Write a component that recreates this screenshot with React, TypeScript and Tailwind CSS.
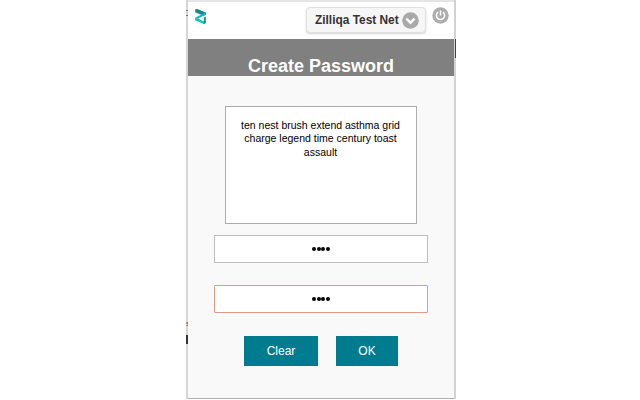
import React from "react";

function Logo() {
  return (
    <svg className="ml-[7px] mt-[7px] h-[15px] w-[11px]" viewBox="0 0 11 15" fill="none">
      <path d="M0.2 0.2 L2.4 0 L10.8 3.6 V5.8 L8.6 6.8 L0.2 3.2 Z" fill="#148a93" />
      <path d="M10.4 4.8 L0.8 9.4" stroke="#12b9b9" strokeWidth="2.1" />
      <path d="M0.2 9 L1.6 8.6 L9.6 13 L9.6 15 L8.6 15 L0.2 11.2 Z" fill="#12c4c2" />
      <path d="M8.8 8.6 L10.8 7.6 V14.2 L8.8 15 Z" fill="#118f96" />
    </svg>
  );
}

function NetworkSelect() {
  return (
    <div className="ml-[100px] mt-[5px] flex h-[26px] w-[120px] items-center rounded-[4px] border border-[#e0e0e0] bg-[#f6f6f6] pl-2 shadow-[0_1px_2px_rgba(0,0,0,0.18)]">
      <span className="w-[84px] whitespace-nowrap pt-px text-[11.9px] font-bold leading-[13px] text-[#333]">Zilliqa Test Net</span>
      <svg className="ml-[2.5px] h-[17px] w-[17px] shrink-0" viewBox="0 0 17 17" fill="none">
        <circle cx="8.5" cy="8.5" r="8.3" fill="#a9a9a9" />
        <path d="M4.4 6.7 L8.5 10.7 L12.6 6.7" stroke="white" strokeWidth="2.5" />
      </svg>
    </div>
  );
}

function PowerButton() {
  return (
    <svg className="ml-[5.5px] mt-[5px] h-[17px] w-[17px] shrink-0" viewBox="0 0 17 17" fill="none">
      <circle cx="8.5" cy="8.5" r="8.2" fill="#adadad" />
      <path d="M6 5.2 A4.1 4.1 0 1 0 11 5.2 M8.5 3.6 V8.5" stroke="white" strokeWidth="1.5" />
    </svg>
  );
}

function PasswordField({ active = false }: { active?: boolean }) {
  return (
    <div
      className={`flex h-7 w-[214px] items-center justify-center gap-[0.7px] border bg-white pb-px ${
        active ? "rounded-[1px] border-[#e39a82]" : "border-[#bdbdbd]"
      }`}
    >
      {[0, 1, 2, 3].map((i) => (
        <span key={i} className="size-[4px] rounded-full bg-black" />
      ))}
    </div>
  );
}

export default function App() {
  return (
    <div className="flex h-[400px] w-[640px] overflow-hidden bg-white pl-[186px] font-['Liberation_Sans',Arial,sans-serif]">
      <div className="flex h-[399px] w-[2px] flex-col bg-[#d5d5d5] pt-[10px]">
        <span className="h-[6px] border-y border-[#777]" />
        <span className="mt-[305px] h-[5px] overflow-hidden text-[7px] leading-[5px] text-[#555]">s</span>
        <span className="mt-[9px] h-[9px] w-[2px] bg-[#333]" />
      </div>
      <div className="h-[399px] w-[266px] border-t-[2px] border-b border-t-[#e5e5e5] border-b-[#b0b0b0] bg-[#f9f9f9]">
        <header className="flex h-[37px] items-start bg-white">
          <Logo />
          <NetworkSelect />
          <PowerButton />
        </header>
        <h1 className="h-[37px] bg-[#808080] pt-[17px] text-center text-[18px] font-bold leading-[20px] text-white">
          Create Password
        </h1>
        <main className="flex flex-col items-center pt-[30px]">
          <p className="h-[118px] w-[192px] border border-[#adadad] bg-white pl-[12px] pr-[13px] pt-[12px] text-center text-[10.5px] leading-[13.4px] text-black">
            ten nest brush extend asthma grid<br />charge legend time century toast<br />assault
          </p>
          <div className="mt-[11px] flex flex-col gap-[22px]">
            <PasswordField />
            <PasswordField active />
          </div>
          <div className="mt-[23px] flex gap-[18px]">
            <button className="h-[30px] w-[74px] bg-[#007c8f] text-[12px] text-white">Clear</button>
            <button className="h-[30px] w-[62px] bg-[#007c8f] text-[12px] text-white">OK</button>
          </div>
        </main>
      </div>
      <div className="h-[399px] w-[2px] bg-[#d2d2d2] pt-[39px]">
        <div className="ml-px h-[19px] w-px bg-[#4b3d3d]" />
      </div>
    </div>
  );
}
